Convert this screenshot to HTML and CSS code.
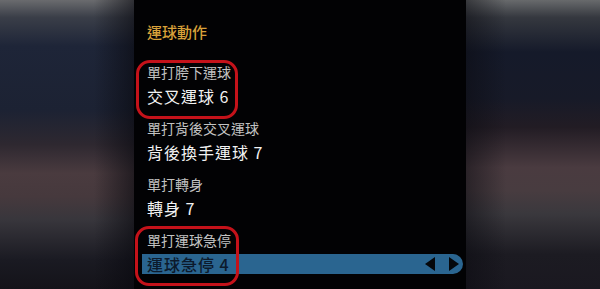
FILE: index.html
```html
<!DOCTYPE html>
<html lang="zh-Hant">
    <head>
        <meta charset="UTF-8" />
        <title>運球動作</title>
        <link rel="stylesheet" href="styles.css">
    </head>
    <body>
        <div class="side side-left"></div>
        <div class="menu">
            <h1 class="menu-title">運球動作</h1>
            <div class="move marked">
                <p class="move-label">單打胯下運球</p>
                <p class="move-value">交叉運球 6</p>
            </div>
            <div class="move">
                <p class="move-label">單打背後交叉運球</p>
                <p class="move-value">背後換手運球 7</p>
            </div>
            <div class="move">
                <p class="move-label">單打轉身</p>
                <p class="move-value">轉身 7</p>
            </div>
            <div class="move marked last">
                <p class="move-label">單打運球急停</p>
                <div class="move-value selected">
                    <span>運球急停 4</span>
                    <span class="arrows">
                        <svg width="34" height="14" viewBox="0 0 34 14">
                            <polygon points="0,7 10,0 10,14" fill="#05070a" />
                            <polygon points="34,7 24,0 24,14" fill="#05070a" />
                        </svg>
                    </span>
                </div>
            </div>
        </div>
        <div class="side side-right"></div>
    </body>
</html>
```

FILE: styles.css
```css
* {
    box-sizing: border-box;
}

body {
    margin: 0;
    width: 600px;
    height: 289px;
    overflow: hidden;
    display: flex;
    background-color: #000;
    font-family: "Noto Sans CJK TC", "Noto Sans", sans-serif;
}

.side {
    width: 134px;
    flex-shrink: 0;
}

.side-left {
    background:
        linear-gradient(to right, rgba(0, 0, 0, 0) 70%, rgba(8, 8, 14, 0.6) 100%),
        linear-gradient(to bottom, #6a6b6e 0%, #3a3e48 6%, #1e2538 16%, #1c2233 38%, #2e2830 50%, #4a3b3f 60%, #46393d 68%, #38363c 76%, #1a1a22 90%, #141319 100%);
}

.side-right {
    background:
        linear-gradient(to right, rgba(10, 10, 16, 0.5) 0%, rgba(0, 0, 0, 0) 30%),
        linear-gradient(to bottom, #686a6c 0%, #35383f 6%, #151a2a 18%, #171a28 34%, #221c24 44%, #4a3b40 58%, #483c40 66%, #3a383d 74%, #1c1b22 88%, #1a1820 100%);
}

.menu {
    width: 332px;
    flex-shrink: 0;
    background-color: #020204;
    padding: 22px 3px 0 13px;
}

.menu-title {
    margin: 0 0 18px;
    font-size: 15px;
    line-height: 20px;
    font-weight: 500;
    color: #d9a13a;
}

.move {
    position: relative;
    margin-bottom: 8px;
}

.move.last {
    margin-bottom: 0;
}

.move p {
    margin: 0;
}

.move-label {
    font-size: 14px;
    line-height: 24px;
    color: #c2c2c2;
}

.move-value {
    font-size: 16px;
    line-height: 24px;
    letter-spacing: 1px;
    color: #f2f2f2;
}

.move-value.selected {
    display: flex;
    justify-content: space-between;
    align-items: center;
    height: 20px;
    margin: 2px 0 0 -5px;
    padding: 0 4px 0 5px;
    background-color: #2a6590;
    border-radius: 0 10px 10px 0;
    color: #0c1a2c;
    font-weight: 500;
}

.arrows {
    display: flex;
}

.marked::after {
    content: "";
    position: absolute;
    left: -11px;
    top: 0;
    width: 96px;
    height: 53px;
    border: 3px solid #c4121a;
    border-radius: 14px;
}

.marked.last::after {
    top: -2px;
    left: -12px;
    width: 98px;
    height: 54px;
}
```
